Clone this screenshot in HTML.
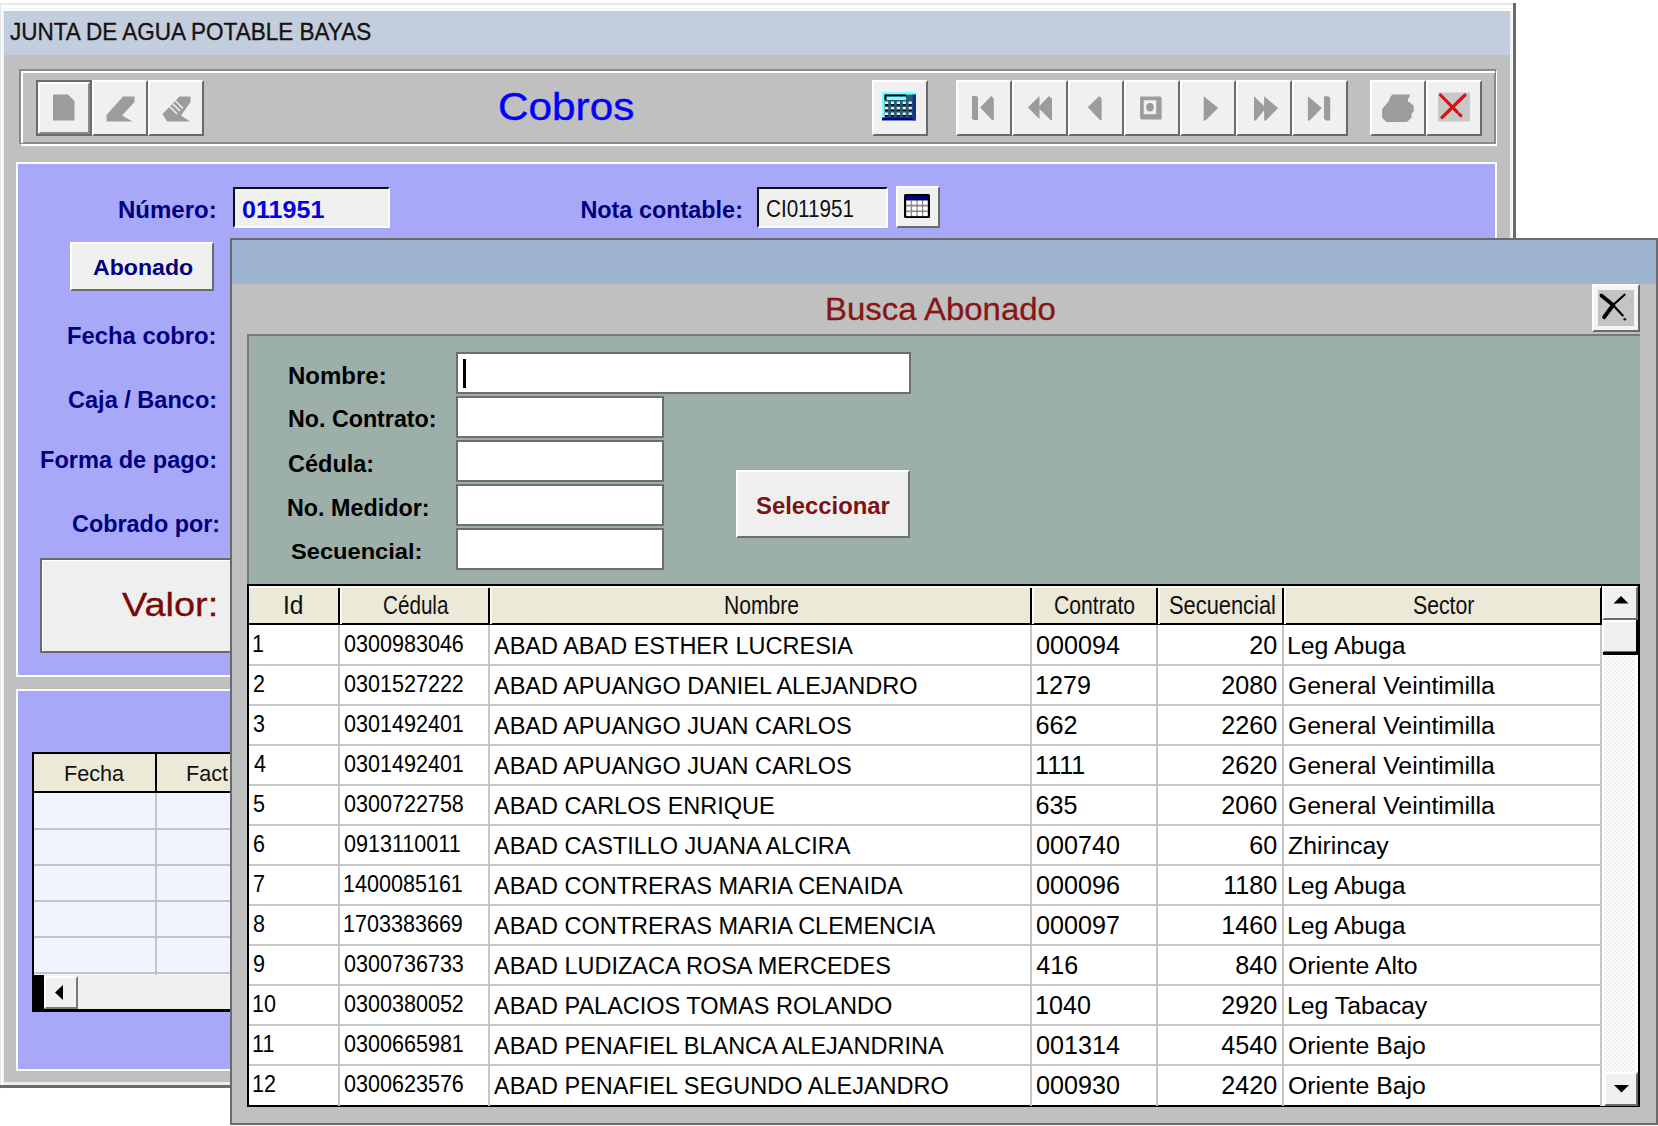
<!DOCTYPE html><html><head><meta charset="utf-8"><style>
html,body{margin:0;padding:0;background:#fff;width:1658px;height:1126px;overflow:hidden;position:relative;font-family:"Liberation Sans",sans-serif;}
div{position:absolute;box-sizing:border-box;}
svg{position:absolute;}
</style></head><body>
<div style="left:0px;top:3px;width:1516px;height:1086px;background:#fff;border-left:1px solid #e4e4e4;border-top:2px solid #e8e8e8;"></div>
<div style="left:2px;top:7.5px;width:1510px;height:1.5px;background:#f3f3f3;"></div>
<div style="left:2px;top:8px;width:1.5px;height:1075px;background:#f3f3f3;"></div>
<div style="left:1513px;top:2.5px;width:3px;height:1086px;background:#6a6a6a;"></div>
<div style="left:0px;top:1085px;width:1516px;height:3px;background:#6a6a6a;"></div>
<div style="left:4px;top:11px;width:1507px;height:44px;background:#c2cedd;"></div>
<div style="left:4px;top:55px;width:1507px;height:1027px;background:#c0c0c0;"></div>
<div style="left:4px;top:1082px;width:1509px;height:3px;background:#ececec;"></div>
<div style="left:1510px;top:11px;width:2px;height:1074px;background:#f4f4f4;"></div>
<div style="left:9.77px;top:19.50px;font-size:24.65px;line-height:24.65px;white-space:pre;transform:scaleX(0.9138);transform-origin:0 0;color:#1a1010;-webkit-text-stroke:0.35px #1a1010;">JUNTA DE AGUA POTABLE BAYAS</div>
<div style="left:21px;top:71px;width:1476px;height:75px;border:2px solid #fff;"></div>
<div style="left:19px;top:69px;width:1477px;height:75px;border:2px solid #8a8a8a;border-right-color:#8a8a8a;"></div>
<div style="left:21px;top:71px;width:1474px;height:72px;border-left:2px solid #fff;border-top:2px solid #fff;"></div>
<div style="left:36px;top:80px;width:56px;height:56px;background:#6a6a6a;"></div>
<div style="left:38px;top:82px;width:52px;height:52px;background:#f0f0f0;border-top:2px solid #fff;border-left:2px solid #fff;border-right:2px solid #8a8a8a;border-bottom:2px solid #8a8a8a;"></div>
<div style="left:92px;top:80px;width:56px;height:56px;background:#f0f0f0;border-top:2px solid #fff;border-left:2px solid #fff;border-right:2px solid #6a6a6a;border-bottom:2px solid #6a6a6a;"></div>
<div style="left:148px;top:80px;width:56px;height:56px;background:#f0f0f0;border-top:2px solid #fff;border-left:2px solid #fff;border-right:2px solid #6a6a6a;border-bottom:2px solid #6a6a6a;"></div>
<svg style="left:0;top:0" width="1658" height="200"><g fill="#9c9c9c"><polygon points="53,94.5 68,94.5 74.5,101 74.5,120.5 53,120.5"/><polygon points="123,96.5 134.5,96.5 134.5,102 122,115.5 132.5,121.5 106.5,121.5 106.5,115"/><polygon points="179.5,96.5 190.5,96.5 190.5,102 181,115.5 190,121.5 167,121.5 162.5,114"/></g><g stroke="#f0f0f0" stroke-width="1.6"><line x1="172" y1="103" x2="180" y2="111"/><line x1="175" y1="100.5" x2="183" y2="108.5"/><line x1="169" y1="106" x2="177" y2="114"/></g></svg>
<div style="left:497.88px;top:86.50px;font-size:39.45px;line-height:39.45px;white-space:pre;transform:scaleX(1.0724);transform-origin:0 0;color:#0000ff;-webkit-text-stroke:0.4px #0000ff;">Cobros</div>
<div style="left:872px;top:80px;width:56px;height:56px;background:#f0f0f0;border-top:2px solid #fff;border-left:2px solid #fff;border-right:2px solid #6a6a6a;border-bottom:2px solid #6a6a6a;"></div>
<svg style="left:876px;top:86px" width="48" height="40"><rect x="6" y="6" width="34" height="28.3" fill="#1f5c78"/><rect x="6" y="6" width="34" height="2.6" fill="#7ffcff"/><rect x="6" y="6" width="2.6" height="28" fill="#7ffcff"/><rect x="6" y="31.6" width="34" height="2.7" fill="#00008c"/><rect x="36.6" y="8.5" width="3.4" height="25.8" fill="#1a3090"/><rect x="8.5" y="8.5" width="21.5" height="5.5" fill="#000"/><rect x="10.5" y="10.5" width="19.5" height="3.5" fill="#7ffcff"/><rect x="9.0" y="15.5" width="3.2" height="2.6" fill="#f4e8e8"/><rect x="9.0" y="18.1" width="3.2" height="1.4" fill="#000"/><rect x="9.0" y="21.0" width="3.2" height="2.6" fill="#f4e8e8"/><rect x="9.0" y="23.6" width="3.2" height="1.4" fill="#000"/><rect x="9.0" y="26.5" width="3.2" height="2.6" fill="#f4e8e8"/><rect x="9.0" y="29.1" width="3.2" height="1.4" fill="#000"/><rect x="14.9" y="15.5" width="3.2" height="2.6" fill="#f4e8e8"/><rect x="14.9" y="18.1" width="3.2" height="1.4" fill="#000"/><rect x="14.9" y="21.0" width="3.2" height="2.6" fill="#f4e8e8"/><rect x="14.9" y="23.6" width="3.2" height="1.4" fill="#000"/><rect x="14.9" y="26.5" width="3.2" height="2.6" fill="#f4e8e8"/><rect x="14.9" y="29.1" width="3.2" height="1.4" fill="#000"/><rect x="20.8" y="15.5" width="3.2" height="2.6" fill="#f4e8e8"/><rect x="20.8" y="18.1" width="3.2" height="1.4" fill="#000"/><rect x="20.8" y="21.0" width="3.2" height="2.6" fill="#f4e8e8"/><rect x="20.8" y="23.6" width="3.2" height="1.4" fill="#000"/><rect x="20.8" y="26.5" width="3.2" height="2.6" fill="#f4e8e8"/><rect x="20.8" y="29.1" width="3.2" height="1.4" fill="#000"/><rect x="26.7" y="15.5" width="3.2" height="2.6" fill="#f4e8e8"/><rect x="26.7" y="18.1" width="3.2" height="1.4" fill="#000"/><rect x="26.7" y="21.0" width="3.2" height="2.6" fill="#f4e8e8"/><rect x="26.7" y="23.6" width="3.2" height="1.4" fill="#000"/><rect x="26.7" y="26.5" width="3.2" height="2.6" fill="#f4e8e8"/><rect x="26.7" y="29.1" width="3.2" height="1.4" fill="#000"/><rect x="32.6" y="15.5" width="3.2" height="2.6" fill="#f4e8e8"/><rect x="32.6" y="18.1" width="3.2" height="1.4" fill="#000"/><rect x="32.6" y="21.0" width="3.2" height="2.6" fill="#f4e8e8"/><rect x="32.6" y="23.6" width="3.2" height="1.4" fill="#000"/><rect x="32.6" y="26.5" width="3.2" height="2.6" fill="#f4e8e8"/><rect x="32.6" y="29.1" width="3.2" height="1.4" fill="#000"/></svg>
<div style="left:956px;top:80px;width:56px;height:56px;background:#f0f0f0;border-top:2px solid #fff;border-left:2px solid #fff;border-right:2px solid #6a6a6a;border-bottom:2px solid #6a6a6a;"></div>
<div style="left:1012px;top:80px;width:56px;height:56px;background:#f0f0f0;border-top:2px solid #fff;border-left:2px solid #fff;border-right:2px solid #6a6a6a;border-bottom:2px solid #6a6a6a;"></div>
<div style="left:1068px;top:80px;width:56px;height:56px;background:#f0f0f0;border-top:2px solid #fff;border-left:2px solid #fff;border-right:2px solid #6a6a6a;border-bottom:2px solid #6a6a6a;"></div>
<div style="left:1124px;top:80px;width:56px;height:56px;background:#f0f0f0;border-top:2px solid #fff;border-left:2px solid #fff;border-right:2px solid #6a6a6a;border-bottom:2px solid #6a6a6a;"></div>
<div style="left:1180px;top:80px;width:56px;height:56px;background:#f0f0f0;border-top:2px solid #fff;border-left:2px solid #fff;border-right:2px solid #6a6a6a;border-bottom:2px solid #6a6a6a;"></div>
<div style="left:1236px;top:80px;width:56px;height:56px;background:#f0f0f0;border-top:2px solid #fff;border-left:2px solid #fff;border-right:2px solid #6a6a6a;border-bottom:2px solid #6a6a6a;"></div>
<div style="left:1292px;top:80px;width:56px;height:56px;background:#f0f0f0;border-top:2px solid #fff;border-left:2px solid #fff;border-right:2px solid #6a6a6a;border-bottom:2px solid #6a6a6a;"></div>
<div style="left:1370px;top:80px;width:56px;height:56px;background:#f0f0f0;border-top:2px solid #fff;border-left:2px solid #fff;border-right:2px solid #6a6a6a;border-bottom:2px solid #6a6a6a;"></div>
<div style="left:1426px;top:80px;width:56px;height:56px;background:#f0f0f0;border-top:2px solid #fff;border-left:2px solid #fff;border-right:2px solid #6a6a6a;border-bottom:2px solid #6a6a6a;"></div>
<svg style="left:0;top:0" width="1658" height="200"><g fill="#9c9c9c"><polygon points="972,96 976.5,96 978,97.5 978,120 973.5,120 972,118.5"/><polygon points="980.2,107.5 991.3,96 993.8,98.5 993.8,120 992,120"/><polygon points="1027.8,107.5 1039.5,96 1039.5,119"/><polygon points="1038,107.5 1049,96 1052,99 1052,120 1050.5,120"/><polygon points="1087.8,107.3 1099.2,96 1101.6,98.5 1101.6,120 1100,120"/><path d="M1140.1,96.4 h20 l1.5,1.5 v21.6 h-20 l-1.5,-1.5 z M1143.7,100.2 v14.1 h12.5 v-14.1 z"/><ellipse cx="1150" cy="107.3" rx="3.8" ry="4.3"/><polygon points="1203.7,96.3 1218.2,108.1 1205.5,120.4 1203.7,120.4"/><polygon points="1254,96.3 1266,108 1255.8,120.4 1254,120.4"/><polygon points="1264.1,96.3 1278.1,108 1266,120.4 1264.1,120.4"/><polygon points="1307.9,96.3 1321.9,108 1309.7,120.4 1307.9,120.4"/><polygon points="1324,96.3 1328.5,96.3 1330.2,98.3 1330.2,120.4 1325.8,120.4 1324,118.5"/><polygon points="1392.4,94.4 1409.8,94.4 1409.8,96.2 1408,99 1408,101.5 1410.5,102.9 1413.7,105.8 1413.7,111.4 1411.6,113.6 1411.6,117.5 1407,122.1 1386.4,122.1 1382.1,117.5 1382.1,109 1388.5,101.5 1390.6,96.5"/></g><rect x="1438" y="92.5" width="32" height="29" fill="#c8c8c8"/><g stroke="#e01010" stroke-width="3.2" stroke-linecap="round"><line x1="1440.5" y1="95" x2="1465" y2="120" stroke-dasharray="24 3 2"/><line x1="1465" y1="95" x2="1442" y2="117.5"/></g></svg>
<div style="left:16px;top:162px;width:1481px;height:515px;background:#a7a8f7;border:2px solid #fdfdfd;"></div>
<div style="left:16px;top:689px;width:1481px;height:382px;background:#a7a8f7;border:2px solid #fdfdfd;"></div>
<div style="left:117.56px;top:198.00px;font-size:24.57px;line-height:24.57px;white-space:pre;font-weight:bold;transform:scaleX(0.9768);transform-origin:0 0;font-weight:bold;color:#000080;">Número:</div>
<div style="left:233px;top:187px;width:157px;height:41px;background:#f0f0f0;border-top:2px solid #101010;border-left:2px solid #101010;border-bottom:2px solid #fff;border-right:2px solid #fff;"></div>
<div style="left:242.25px;top:198.00px;font-size:24.57px;line-height:24.57px;white-space:pre;font-weight:bold;transform:scaleX(1.0220);transform-origin:0 0;color:#0000e0;">011951</div>
<div style="left:580.39px;top:199.00px;font-size:23.42px;line-height:23.42px;white-space:pre;font-weight:bold;font-weight:bold;color:#000080;">Nota contable:</div>
<div style="left:757px;top:187px;width:131px;height:41px;background:#f0f0f0;border-top:2px solid #101010;border-left:2px solid #101010;border-bottom:2px solid #fff;border-right:2px solid #fff;"></div>
<div style="left:766.17px;top:198.10px;font-size:23.14px;line-height:23.14px;white-space:pre;transform:scaleX(0.8920);transform-origin:0 0;color:#101010;">CI011951</div>
<div style="left:896px;top:186px;width:44px;height:42px;background:#f0f0f0;border-top:2px solid #fff;border-left:2px solid #fff;border-right:2px solid #6a6a6a;border-bottom:2px solid #6a6a6a;"></div>
<svg style="left:896px;top:186px" width="44" height="42"><rect x="8" y="8" width="26" height="24" rx="1.5" fill="#000"/><rect x="10" y="10" width="22" height="4.2" fill="#00007c"/><rect x="10" y="14.2" width="22" height="16" fill="#8c8c8c"/><rect x="10.4" y="14.8" width="4.4" height="4.0" rx="1" fill="#fff"/><rect x="10.4" y="20.4" width="4.4" height="4.0" rx="1" fill="#fff"/><rect x="10.4" y="26.0" width="4.4" height="4.0" rx="1" fill="#fff"/><rect x="16.0" y="14.8" width="4.4" height="4.0" rx="1" fill="#fff"/><rect x="16.0" y="20.4" width="4.4" height="4.0" rx="1" fill="#fff"/><rect x="16.0" y="26.0" width="4.4" height="4.0" rx="1" fill="#fff"/><rect x="21.6" y="14.8" width="4.4" height="4.0" rx="1" fill="#fff"/><rect x="21.6" y="20.4" width="4.4" height="4.0" rx="1" fill="#fff"/><rect x="21.6" y="26.0" width="4.4" height="4.0" rx="1" fill="#fff"/><rect x="27.2" y="14.8" width="4.4" height="4.0" rx="1" fill="#fff"/><rect x="27.2" y="20.4" width="4.4" height="4.0" rx="1" fill="#fff"/><rect x="27.2" y="26.0" width="4.4" height="4.0" rx="1" fill="#fff"/></svg>
<div style="left:70px;top:242px;width:144px;height:49px;background:#f0f0f0;border-top:2px solid #fff;border-left:2px solid #fff;border-right:2px solid #6a6a6a;border-bottom:2px solid #6a6a6a;"></div>
<div style="left:92.54px;top:257.00px;font-size:22.33px;line-height:22.33px;white-space:pre;font-weight:bold;transform:scaleX(1.0355);transform-origin:0 0;font-weight:bold;color:#000080;">Abonado</div>
<div style="left:67.27px;top:325.00px;font-size:23.29px;line-height:23.29px;white-space:pre;font-weight:bold;transform:scaleX(1.0226);transform-origin:0 0;font-weight:bold;color:#000080;">Fecha cobro:</div>
<div style="left:67.56px;top:387.90px;font-size:23.84px;line-height:23.84px;white-space:pre;font-weight:bold;transform:scaleX(0.9881);transform-origin:0 0;font-weight:bold;color:#000080;">Caja / Banco:</div>
<div style="left:39.78px;top:447.80px;font-size:23.97px;line-height:23.97px;white-space:pre;font-weight:bold;transform:scaleX(0.9846);transform-origin:0 0;font-weight:bold;color:#000080;">Forma de pago:</div>
<div style="left:71.76px;top:512.80px;font-size:23.7px;line-height:23.7px;white-space:pre;font-weight:bold;transform:scaleX(0.9876);transform-origin:0 0;font-weight:bold;color:#000080;">Cobrado por:</div>
<div style="left:40px;top:558px;width:240px;height:95px;background:#efefef;border:2px solid #6a6a6a;"></div>
<div style="left:42px;top:560px;width:236px;height:91px;border-top:1px solid #fff;border-left:1px solid #fff;"></div>
<div style="left:122.00px;top:588.30px;font-size:33.56px;line-height:33.56px;white-space:pre;transform:scaleX(1.1310);transform-origin:0 0;color:#7a0808;-webkit-text-stroke:0.3px #7a0808;">Valor:</div>
<div style="left:32px;top:752px;width:260px;height:260px;background:#f0f4ff;border:2px solid #000;"></div>
<div style="left:34px;top:754px;width:260px;height:39px;background:#ece9d8;border-bottom:2px solid #000;"></div>
<div style="left:155px;top:754px;width:2px;height:39px;background:#000;"></div>
<div style="left:34px;top:828px;width:260px;height:2px;background:#c4c4c4;"></div>
<div style="left:34px;top:864px;width:260px;height:2px;background:#c4c4c4;"></div>
<div style="left:34px;top:900px;width:260px;height:2px;background:#c4c4c4;"></div>
<div style="left:34px;top:936px;width:260px;height:2px;background:#c4c4c4;"></div>
<div style="left:34px;top:972px;width:260px;height:2px;background:#c4c4c4;"></div>
<div style="left:155px;top:793px;width:2px;height:182px;background:#c4c4c4;"></div>
<div style="left:64.17px;top:762.20px;font-size:22.88px;line-height:22.88px;white-space:pre;transform:scaleX(0.9443);transform-origin:0 0;color:#101010;">Fecha</div>
<div style="left:185.67px;top:762.20px;font-size:22.88px;line-height:22.88px;white-space:pre;transform:scaleX(0.9443);transform-origin:0 0;color:#101010;">Fact</div>
<div style="left:34px;top:975px;width:260px;height:35px;background:#f0f0f0;"></div>
<div style="left:33px;top:975px;width:11px;height:36px;background:#000;"></div>
<div style="left:44px;top:976px;width:34px;height:33px;background:#f0f0f0;border-top:2px solid #fff;border-left:2px solid #fff;border-right:2px solid #7a7a7a;border-bottom:2px solid #7a7a7a;"></div>
<svg style="left:52px;top:984px" width="16" height="18"><polygon points="11,1 11,16 3,8.5" fill="#000"/></svg>
<div style="left:33px;top:1009px;width:260px;height:2px;background:#000;"></div>
<div style="left:230px;top:238px;width:1428px;height:887px;background:#c0c0c0;border-left:2px solid #6a6a6a;border-top:2px solid #6a6a6a;border-right:2px solid #6a6a6a;border-bottom:2px solid #6a6a6a;"></div>
<div style="left:232px;top:240px;width:1424px;height:44px;background:#9eb3cf;"></div>
<div style="left:825.36px;top:293.00px;font-size:32.19px;line-height:32.19px;white-space:pre;transform:scaleX(1.0244);transform-origin:0 0;color:#861616;-webkit-text-stroke:0.3px #861616;">Busca Abonado</div>
<div style="left:1592px;top:284px;width:48px;height:48px;background:#f4f4f4;border-right:2px solid #6a6a6a;border-bottom:2px solid #6a6a6a;border-top:2px solid #fff;border-left:2px solid #fff;"></div>
<div style="left:1598px;top:290px;width:36px;height:36px;background:#c4c4c4;"></div>
<svg style="left:1592px;top:284px" width="48" height="48"><g stroke="#000" stroke-linecap="round"><line x1="9.4" y1="11.5" x2="21.1" y2="21" stroke-width="3.6"/><line x1="21.1" y1="21" x2="30.7" y2="31.4" stroke-width="2.2"/><line x1="32.5" y1="10.7" x2="21.1" y2="21" stroke-width="2.2"/><line x1="21.1" y1="21" x2="12.2" y2="33.1" stroke-width="4"/></g><circle cx="32.8" cy="35.2" r="1.3" fill="#000"/></svg>
<div style="left:247px;top:334px;width:1393px;height:252px;background:#9cb0a9;border-top:2px solid #7a7a7a;border-left:2px solid #7a7a7a;"></div>
<div style="left:287.56px;top:364.30px;font-size:24.25px;line-height:24.25px;white-space:pre;font-weight:bold;transform:scaleX(0.9897);transform-origin:0 0;font-weight:bold;color:#000;">Nombre:</div>
<div style="left:287.60px;top:407.40px;font-size:24.43px;line-height:24.43px;white-space:pre;font-weight:bold;transform:scaleX(0.9520);transform-origin:0 0;font-weight:bold;color:#000;">No. Contrato:</div>
<div style="left:287.76px;top:451.80px;font-size:23.84px;line-height:23.84px;white-space:pre;font-weight:bold;transform:scaleX(0.9863);transform-origin:0 0;font-weight:bold;color:#000;">Cédula:</div>
<div style="left:287.30px;top:497.20px;font-size:23.7px;line-height:23.7px;white-space:pre;font-weight:bold;transform:scaleX(0.9852);transform-origin:0 0;font-weight:bold;color:#000;">No. Medidor:</div>
<div style="left:290.53px;top:540.90px;font-size:22.05px;line-height:22.05px;white-space:pre;font-weight:bold;transform:scaleX(1.0719);transform-origin:0 0;font-weight:bold;color:#000;">Secuencial:</div>
<div style="left:456px;top:352px;width:455px;height:42px;background:#fff;border:2px solid #6e6e6e;"></div>
<div style="left:462.5px;top:359px;width:3px;height:29px;background:#000;"></div>
<div style="left:456px;top:396px;width:208px;height:42px;background:#fff;border:2px solid #6e6e6e;"></div>
<div style="left:456px;top:440px;width:208px;height:42px;background:#fff;border:2px solid #6e6e6e;"></div>
<div style="left:456px;top:484px;width:208px;height:42px;background:#fff;border:2px solid #6e6e6e;"></div>
<div style="left:456px;top:528px;width:208px;height:42px;background:#fff;border:2px solid #6e6e6e;"></div>
<div style="left:736px;top:470px;width:174px;height:68px;background:#efefef;border-top:2px solid #fff;border-left:2px solid #fff;border-right:2px solid #6e6e6e;border-bottom:2px solid #6e6e6e;"></div>
<div style="left:756.12px;top:494.30px;font-size:24.25px;line-height:24.25px;white-space:pre;font-weight:bold;transform:scaleX(0.9835);transform-origin:0 0;color:#7c1212;">Seleccionar</div>
<div style="left:247px;top:584px;width:1393px;height:523px;background:#fff;border:2px solid #000;"></div>
<div style="left:249px;top:586px;width:1352px;height:38px;background:#ece9d8;"></div>
<div style="left:249px;top:623px;width:1353px;height:2px;background:#000;"></div>
<div style="left:338px;top:586px;width:2px;height:38px;background:#000;"></div>
<div style="left:340px;top:586px;width:1.5px;height:38px;background:#fbfbf4;"></div>
<div style="left:488px;top:586px;width:2px;height:38px;background:#000;"></div>
<div style="left:490px;top:586px;width:1.5px;height:38px;background:#fbfbf4;"></div>
<div style="left:1030px;top:586px;width:2px;height:38px;background:#000;"></div>
<div style="left:1032px;top:586px;width:1.5px;height:38px;background:#fbfbf4;"></div>
<div style="left:1156px;top:586px;width:2px;height:38px;background:#000;"></div>
<div style="left:1158px;top:586px;width:1.5px;height:38px;background:#fbfbf4;"></div>
<div style="left:1282px;top:586px;width:2px;height:38px;background:#000;"></div>
<div style="left:1284px;top:586px;width:1.5px;height:38px;background:#fbfbf4;"></div>
<div style="left:1600px;top:586px;width:2px;height:38px;background:#000;"></div>
<div style="left:1602px;top:586px;width:1.5px;height:38px;background:#fbfbf4;"></div>
<div style="left:249px;top:586px;width:1352px;height:1.5px;background:#fbfbf4;"></div>
<div style="left:283.49px;top:592.90px;font-size:25.43px;line-height:25.43px;white-space:pre;transform:scaleX(0.9662);transform-origin:0 0;color:#101010;">Id</div>
<div style="left:382.97px;top:592.90px;font-size:25.43px;line-height:25.43px;white-space:pre;transform:scaleX(0.8122);transform-origin:0 0;color:#101010;">Cédula</div>
<div style="left:724.31px;top:592.90px;font-size:25.43px;line-height:25.43px;white-space:pre;transform:scaleX(0.8298);transform-origin:0 0;color:#101010;">Nombre</div>
<div style="left:1054.44px;top:592.90px;font-size:25.43px;line-height:25.43px;white-space:pre;transform:scaleX(0.8317);transform-origin:0 0;color:#101010;">Contrato</div>
<div style="left:1168.63px;top:592.90px;font-size:25.43px;line-height:25.43px;white-space:pre;transform:scaleX(0.8596);transform-origin:0 0;color:#101010;">Secuencial</div>
<div style="left:1412.75px;top:592.90px;font-size:25.43px;line-height:25.43px;white-space:pre;transform:scaleX(0.8358);transform-origin:0 0;color:#101010;">Sector</div>
<div style="left:338px;top:625px;width:2px;height:481px;background:#c6c6c6;"></div>
<div style="left:488px;top:625px;width:2px;height:481px;background:#c6c6c6;"></div>
<div style="left:1030px;top:625px;width:2px;height:481px;background:#c6c6c6;"></div>
<div style="left:1156px;top:625px;width:2px;height:481px;background:#c6c6c6;"></div>
<div style="left:1282px;top:625px;width:2px;height:481px;background:#c6c6c6;"></div>
<div style="left:1600px;top:625px;width:2px;height:481px;background:#c6c6c6;"></div>
<div style="left:249px;top:664px;width:1352px;height:2px;background:#c6c6c6;"></div>
<div style="left:249px;top:704px;width:1352px;height:2px;background:#c6c6c6;"></div>
<div style="left:249px;top:744px;width:1352px;height:2px;background:#c6c6c6;"></div>
<div style="left:249px;top:784px;width:1352px;height:2px;background:#c6c6c6;"></div>
<div style="left:249px;top:824px;width:1352px;height:2px;background:#c6c6c6;"></div>
<div style="left:249px;top:864px;width:1352px;height:2px;background:#c6c6c6;"></div>
<div style="left:249px;top:904px;width:1352px;height:2px;background:#c6c6c6;"></div>
<div style="left:249px;top:944px;width:1352px;height:2px;background:#c6c6c6;"></div>
<div style="left:249px;top:984px;width:1352px;height:2px;background:#c6c6c6;"></div>
<div style="left:249px;top:1024px;width:1352px;height:2px;background:#c6c6c6;"></div>
<div style="left:249px;top:1064px;width:1352px;height:2px;background:#c6c6c6;"></div>
<div style="left:344.35px;top:633.00px;font-size:23.14px;line-height:23.14px;white-space:pre;transform:scaleX(0.9319);transform-origin:0 0;color:#000;">0300983046</div>
<div style="left:252.49px;top:633.00px;font-size:23.14px;line-height:23.14px;white-space:pre;transform:scaleX(0.9319);transform-origin:0 0;color:#000;">1</div>
<div style="left:494.00px;top:633.80px;font-size:24.79px;line-height:24.79px;white-space:pre;transform:scaleX(0.9480);transform-origin:0 0;color:#000;">ABAD ABAD ESTHER LUCRESIA</div>
<div style="left:1036.04px;top:632.80px;font-size:25.14px;line-height:25.14px;white-space:pre;color:#000;">000094</div>
<div style="left:1249.37px;top:632.80px;font-size:25.14px;line-height:25.14px;white-space:pre;color:#000;">20</div>
<div style="left:1287.02px;top:633.80px;font-size:24.25px;line-height:24.25px;white-space:pre;transform:scaleX(1.0231);transform-origin:0 0;color:#000;">Leg Abuga</div>
<div style="left:252.92px;top:673.00px;font-size:23.14px;line-height:23.14px;white-space:pre;transform:scaleX(0.9319);transform-origin:0 0;color:#000;">2</div>
<div style="left:344.35px;top:673.00px;font-size:23.14px;line-height:23.14px;white-space:pre;transform:scaleX(0.9319);transform-origin:0 0;color:#000;">0301527222</div>
<div style="left:494.00px;top:673.70px;font-size:24.79px;line-height:24.79px;white-space:pre;transform:scaleX(0.9480);transform-origin:0 0;color:#000;">ABAD APUANGO DANIEL ALEJANDRO</div>
<div style="left:1035.04px;top:672.70px;font-size:25.14px;line-height:25.14px;white-space:pre;color:#000;">1279</div>
<div style="left:1221.33px;top:672.70px;font-size:25.14px;line-height:25.14px;white-space:pre;color:#000;">2080</div>
<div style="left:1287.76px;top:673.70px;font-size:24.25px;line-height:24.25px;white-space:pre;transform:scaleX(1.0231);transform-origin:0 0;color:#000;">General Veintimilla</div>
<div style="left:253.35px;top:713.00px;font-size:23.14px;line-height:23.14px;white-space:pre;transform:scaleX(0.9319);transform-origin:0 0;color:#000;">3</div>
<div style="left:344.35px;top:713.00px;font-size:23.14px;line-height:23.14px;white-space:pre;transform:scaleX(0.9319);transform-origin:0 0;color:#000;">0301492401</div>
<div style="left:494.00px;top:713.70px;font-size:24.79px;line-height:24.79px;white-space:pre;transform:scaleX(0.9480);transform-origin:0 0;color:#000;">ABAD APUANGO JUAN CARLOS</div>
<div style="left:1035.54px;top:712.70px;font-size:25.14px;line-height:25.14px;white-space:pre;color:#000;">662</div>
<div style="left:1221.33px;top:712.70px;font-size:25.14px;line-height:25.14px;white-space:pre;color:#000;">2260</div>
<div style="left:1287.76px;top:713.70px;font-size:24.25px;line-height:24.25px;white-space:pre;transform:scaleX(1.0231);transform-origin:0 0;color:#000;">General Veintimilla</div>
<div style="left:253.57px;top:753.00px;font-size:23.14px;line-height:23.14px;white-space:pre;transform:scaleX(0.9319);transform-origin:0 0;color:#000;">4</div>
<div style="left:344.35px;top:753.00px;font-size:23.14px;line-height:23.14px;white-space:pre;transform:scaleX(0.9319);transform-origin:0 0;color:#000;">0301492401</div>
<div style="left:494.00px;top:753.70px;font-size:24.79px;line-height:24.79px;white-space:pre;transform:scaleX(0.9480);transform-origin:0 0;color:#000;">ABAD APUANGO JUAN CARLOS</div>
<div style="left:1035.04px;top:752.70px;font-size:25.14px;line-height:25.14px;white-space:pre;color:#000;">1111</div>
<div style="left:1221.33px;top:752.70px;font-size:25.14px;line-height:25.14px;white-space:pre;color:#000;">2620</div>
<div style="left:1287.76px;top:753.70px;font-size:24.25px;line-height:24.25px;white-space:pre;transform:scaleX(1.0231);transform-origin:0 0;color:#000;">General Veintimilla</div>
<div style="left:253.14px;top:793.00px;font-size:23.14px;line-height:23.14px;white-space:pre;transform:scaleX(0.9319);transform-origin:0 0;color:#000;">5</div>
<div style="left:344.35px;top:793.00px;font-size:23.14px;line-height:23.14px;white-space:pre;transform:scaleX(0.9319);transform-origin:0 0;color:#000;">0300722758</div>
<div style="left:494.00px;top:793.70px;font-size:24.79px;line-height:24.79px;white-space:pre;transform:scaleX(0.9480);transform-origin:0 0;color:#000;">ABAD CARLOS ENRIQUE</div>
<div style="left:1035.54px;top:792.70px;font-size:25.14px;line-height:25.14px;white-space:pre;color:#000;">635</div>
<div style="left:1221.33px;top:792.70px;font-size:25.14px;line-height:25.14px;white-space:pre;color:#000;">2060</div>
<div style="left:1287.76px;top:793.70px;font-size:24.25px;line-height:24.25px;white-space:pre;transform:scaleX(1.0231);transform-origin:0 0;color:#000;">General Veintimilla</div>
<div style="left:252.92px;top:833.00px;font-size:23.14px;line-height:23.14px;white-space:pre;transform:scaleX(0.9319);transform-origin:0 0;color:#000;">6</div>
<div style="left:344.35px;top:833.00px;font-size:23.14px;line-height:23.14px;white-space:pre;transform:scaleX(0.9319);transform-origin:0 0;color:#000;">0913110011</div>
<div style="left:494.00px;top:833.70px;font-size:24.79px;line-height:24.79px;white-space:pre;transform:scaleX(0.9480);transform-origin:0 0;color:#000;">ABAD CASTILLO JUANA ALCIRA</div>
<div style="left:1036.04px;top:832.70px;font-size:25.14px;line-height:25.14px;white-space:pre;color:#000;">000740</div>
<div style="left:1249.37px;top:832.70px;font-size:25.14px;line-height:25.14px;white-space:pre;color:#000;">60</div>
<div style="left:1288.26px;top:833.70px;font-size:24.25px;line-height:24.25px;white-space:pre;transform:scaleX(1.0231);transform-origin:0 0;color:#000;">Zhirincay</div>
<div style="left:252.92px;top:873.00px;font-size:23.14px;line-height:23.14px;white-space:pre;transform:scaleX(0.9319);transform-origin:0 0;color:#000;">7</div>
<div style="left:343.49px;top:873.00px;font-size:23.14px;line-height:23.14px;white-space:pre;transform:scaleX(0.9319);transform-origin:0 0;color:#000;">1400085161</div>
<div style="left:494.00px;top:873.70px;font-size:24.79px;line-height:24.79px;white-space:pre;transform:scaleX(0.9480);transform-origin:0 0;color:#000;">ABAD CONTRERAS MARIA CENAIDA</div>
<div style="left:1036.04px;top:872.70px;font-size:25.14px;line-height:25.14px;white-space:pre;color:#000;">000096</div>
<div style="left:1223.21px;top:872.70px;font-size:25.14px;line-height:25.14px;white-space:pre;color:#000;">1180</div>
<div style="left:1287.02px;top:873.70px;font-size:24.25px;line-height:24.25px;white-space:pre;transform:scaleX(1.0231);transform-origin:0 0;color:#000;">Leg Abuga</div>
<div style="left:253.14px;top:913.00px;font-size:23.14px;line-height:23.14px;white-space:pre;transform:scaleX(0.9319);transform-origin:0 0;color:#000;">8</div>
<div style="left:343.49px;top:913.00px;font-size:23.14px;line-height:23.14px;white-space:pre;transform:scaleX(0.9319);transform-origin:0 0;color:#000;">1703383669</div>
<div style="left:494.00px;top:913.70px;font-size:24.79px;line-height:24.79px;white-space:pre;transform:scaleX(0.9480);transform-origin:0 0;color:#000;">ABAD CONTRERAS MARIA CLEMENCIA</div>
<div style="left:1036.04px;top:912.70px;font-size:25.14px;line-height:25.14px;white-space:pre;color:#000;">000097</div>
<div style="left:1221.33px;top:912.70px;font-size:25.14px;line-height:25.14px;white-space:pre;color:#000;">1460</div>
<div style="left:1287.02px;top:913.70px;font-size:24.25px;line-height:24.25px;white-space:pre;transform:scaleX(1.0231);transform-origin:0 0;color:#000;">Leg Abuga</div>
<div style="left:253.14px;top:953.00px;font-size:23.14px;line-height:23.14px;white-space:pre;transform:scaleX(0.9319);transform-origin:0 0;color:#000;">9</div>
<div style="left:344.35px;top:953.00px;font-size:23.14px;line-height:23.14px;white-space:pre;transform:scaleX(0.9319);transform-origin:0 0;color:#000;">0300736733</div>
<div style="left:494.00px;top:953.70px;font-size:24.79px;line-height:24.79px;white-space:pre;transform:scaleX(0.9480);transform-origin:0 0;color:#000;">ABAD LUDIZACA ROSA MERCEDES</div>
<div style="left:1036.30px;top:952.70px;font-size:25.14px;line-height:25.14px;white-space:pre;color:#000;">416</div>
<div style="left:1235.35px;top:952.70px;font-size:25.14px;line-height:25.14px;white-space:pre;color:#000;">840</div>
<div style="left:1288.01px;top:953.70px;font-size:24.25px;line-height:24.25px;white-space:pre;transform:scaleX(1.0231);transform-origin:0 0;color:#000;">Oriente Alto</div>
<div style="left:252.49px;top:993.00px;font-size:23.14px;line-height:23.14px;white-space:pre;transform:scaleX(0.9319);transform-origin:0 0;color:#000;">10</div>
<div style="left:344.35px;top:993.00px;font-size:23.14px;line-height:23.14px;white-space:pre;transform:scaleX(0.9319);transform-origin:0 0;color:#000;">0300380052</div>
<div style="left:494.00px;top:993.70px;font-size:24.79px;line-height:24.79px;white-space:pre;transform:scaleX(0.9480);transform-origin:0 0;color:#000;">ABAD PALACIOS TOMAS ROLANDO</div>
<div style="left:1035.04px;top:992.70px;font-size:25.14px;line-height:25.14px;white-space:pre;color:#000;">1040</div>
<div style="left:1221.33px;top:992.70px;font-size:25.14px;line-height:25.14px;white-space:pre;color:#000;">2920</div>
<div style="left:1287.02px;top:993.70px;font-size:24.25px;line-height:24.25px;white-space:pre;transform:scaleX(1.0231);transform-origin:0 0;color:#000;">Leg Tabacay</div>
<div style="left:252.49px;top:1033.00px;font-size:23.14px;line-height:23.14px;white-space:pre;transform:scaleX(0.9319);transform-origin:0 0;color:#000;">11</div>
<div style="left:344.35px;top:1033.00px;font-size:23.14px;line-height:23.14px;white-space:pre;transform:scaleX(0.9319);transform-origin:0 0;color:#000;">0300665981</div>
<div style="left:494.00px;top:1033.70px;font-size:24.79px;line-height:24.79px;white-space:pre;transform:scaleX(0.9480);transform-origin:0 0;color:#000;">ABAD PENAFIEL BLANCA ALEJANDRINA</div>
<div style="left:1036.04px;top:1032.70px;font-size:25.14px;line-height:25.14px;white-space:pre;color:#000;">001314</div>
<div style="left:1221.33px;top:1032.70px;font-size:25.14px;line-height:25.14px;white-space:pre;color:#000;">4540</div>
<div style="left:1288.01px;top:1033.70px;font-size:24.25px;line-height:24.25px;white-space:pre;transform:scaleX(1.0231);transform-origin:0 0;color:#000;">Oriente Bajo</div>
<div style="left:252.49px;top:1073.00px;font-size:23.14px;line-height:23.14px;white-space:pre;transform:scaleX(0.9319);transform-origin:0 0;color:#000;">12</div>
<div style="left:344.35px;top:1073.00px;font-size:23.14px;line-height:23.14px;white-space:pre;transform:scaleX(0.9319);transform-origin:0 0;color:#000;">0300623576</div>
<div style="left:494.00px;top:1073.70px;font-size:24.79px;line-height:24.79px;white-space:pre;transform:scaleX(0.9480);transform-origin:0 0;color:#000;">ABAD PENAFIEL SEGUNDO ALEJANDRO</div>
<div style="left:1036.04px;top:1072.70px;font-size:25.14px;line-height:25.14px;white-space:pre;color:#000;">000930</div>
<div style="left:1221.33px;top:1072.70px;font-size:25.14px;line-height:25.14px;white-space:pre;color:#000;">2420</div>
<div style="left:1288.01px;top:1073.70px;font-size:24.25px;line-height:24.25px;white-space:pre;transform:scaleX(1.0231);transform-origin:0 0;color:#000;">Oriente Bajo</div>
<div style="left:1602px;top:586px;width:36px;height:520px;background:#fff;"></div>
<div style="left:1604px;top:656px;width:31px;height:416px;background-color:#f6f6f6;background-image:repeating-conic-gradient(#ffffff 0 25%, #eeeeee 0 50%);background-size:4px 4px;"></div>
<div style="left:1602px;top:586px;width:36px;height:34px;background:#f0f0f0;border-top:2px solid #fff;border-left:2px solid #fff;border-right:2px solid #6e6e6e;border-bottom:2px solid #6e6e6e;"></div>
<div style="left:1602px;top:620px;width:36px;height:33px;background:#f0f0f0;border-top:2px solid #fff;border-left:2px solid #fff;border-right:2px solid #6e6e6e;border-bottom:2px solid #6e6e6e;"></div>
<div style="left:1603px;top:652px;width:35px;height:2.5px;background:#000;"></div>
<div style="left:1636px;top:620px;width:2px;height:34px;background:#000;"></div>
<div style="left:1604px;top:1072px;width:34px;height:34px;background:#f0f0f0;border-top:2px solid #fff;border-left:2px solid #fff;border-right:2px solid #6e6e6e;border-bottom:2px solid #6e6e6e;"></div>
<svg style="left:1600px;top:586px" width="40" height="520"><polygon points="21,10 28.5,17.5 13.5,17.5" fill="#000"/><polygon points="14,499 29,499 21.5,506.5" fill="#000"/></svg>
</body></html>
